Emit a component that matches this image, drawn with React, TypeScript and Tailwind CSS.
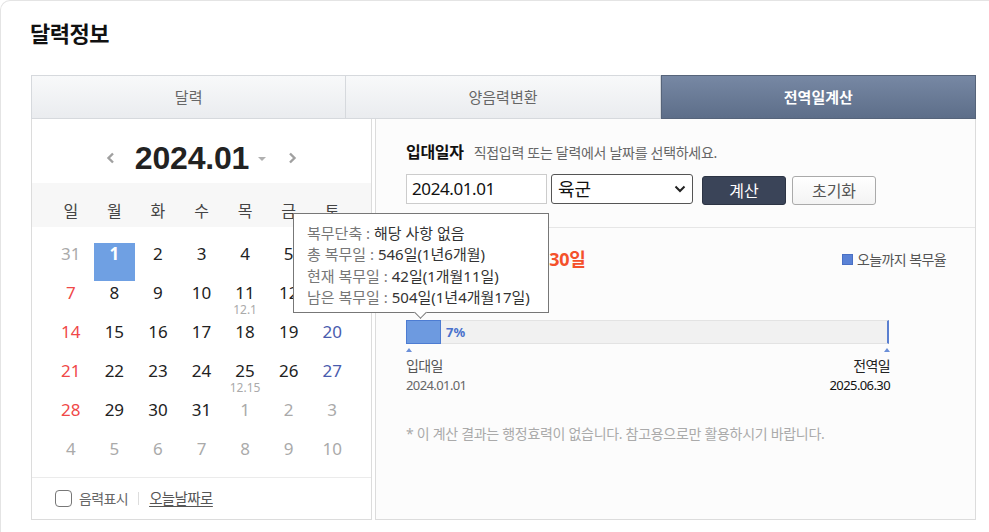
import React from "react"

type Day = { d: number; other?: boolean; lunar?: string; selected?: boolean }

const weekdays = ["일", "월", "화", "수", "목", "금", "토"]

const weeks: Day[][] = [
  [{ d: 31, other: true }, { d: 1, selected: true }, { d: 2 }, { d: 3 }, { d: 4 }, { d: 5 }, { d: 6 }],
  [{ d: 7 }, { d: 8 }, { d: 9 }, { d: 10 }, { d: 11, lunar: "12.1" }, { d: 12 }, { d: 13 }],
  [{ d: 14 }, { d: 15 }, { d: 16 }, { d: 17 }, { d: 18 }, { d: 19 }, { d: 20 }],
  [{ d: 21 }, { d: 22 }, { d: 23 }, { d: 24 }, { d: 25, lunar: "12.15" }, { d: 26 }, { d: 27 }],
  [{ d: 28 }, { d: 29 }, { d: 30 }, { d: 31 }, { d: 1, other: true }, { d: 2, other: true }, { d: 3, other: true }],
  [4, 5, 6, 7, 8, 9, 10].map((d) => ({ d, other: true })),
]

function dayColor(day: Day, col: number) {
  if (day.selected) return "text-white font-bold"
  if (day.other) return "text-[#aaaaaa]"
  if (col === 0) return "text-[#f04848]"
  if (col === 6) return "text-[#4a5cae]"
  return "text-[#222222]"
}

function Tab({ label, active = false, first = false }: { label: string; active?: boolean; first?: boolean }) {
  if (active) {
    return (
      <div className="flex-1 flex items-center justify-center border border-[#56647a] bg-gradient-to-b from-[#7788a4] to-[#5d6e89] text-white font-bold text-[15px]">
        {label}
      </div>
    )
  }
  return (
    <div
      className={
        "flex-1 flex items-center justify-center border-y border-r border-[#d6d9dd] bg-gradient-to-b from-[#f8f9fa] to-[#eaecef] text-[#666666] text-[15px] " +
        (first ? "border-l" : "")
      }
    >
      {label}
    </div>
  )
}

function Calendar() {
  return (
    <div className="w-[341px] border-x border-b border-[#dcdcdc] bg-white flex flex-col">
      {/* month header */}
      <div className="h-[64px] flex items-center justify-center pt-[14px]">
        <svg width="9" height="12" viewBox="0 0 9 12" className="mr-[20px]">
          <polyline points="7,1.5 2.5,6 7,10.5" fill="none" stroke="#a0a0a0" strokeWidth="2.4" />
        </svg>
        <span className="font-['Liberation_Sans',sans-serif] font-bold text-[32px] leading-none text-[#222222] tracking-[-0.2px]">
          2024.01
        </span>
        <svg width="8" height="5" viewBox="0 0 8 5" className="ml-[9px] mt-[3px]">
          <polygon points="0,0 8,0 4,4" fill="#b0b0b0" />
        </svg>
        <svg width="9" height="12" viewBox="0 0 9 12" className="ml-[22px]">
          <polyline points="2,1.5 6.5,6 2,10.5" fill="none" stroke="#a0a0a0" strokeWidth="2.4" />
        </svg>
      </div>

      {/* weekdays */}
      <div className="h-[44px] bg-[#f7f7f7] grid grid-cols-7 px-[17px] pt-[18px]">
        {weekdays.map((w) => (
          <div key={w} className="text-center text-[16px] leading-[20px] text-[#444444]">
            {w}
          </div>
        ))}
      </div>

      {/* dates */}
      <div className="px-[17px] pt-[16px]">
        {weeks.map((week, wi) => (
          <div key={wi} className="grid grid-cols-7 h-[39px]">
            {week.map((day, ci) => (
              <div
                key={ci}
                className={
                  "flex flex-col items-center h-[38px] mx-px pt-px " + (day.selected ? "bg-[#6fa0e3]" : "")
                }
              >
                <span className={"text-[17px] leading-[20px] " + dayColor(day, ci)}>{day.d}</span>
                {day.lunar && <span className="text-[12px] leading-[15px] text-[#aaaaaa] -mt-px">{day.lunar}</span>}
              </div>
            ))}
          </div>
        ))}
      </div>

      {/* footer */}
      <div className="h-[42px] border-t border-[#ebebeb] flex items-center pl-[23px] text-[14px] tracking-[-0.6px]">
        <span className="w-[17px] h-[17px] rounded-[4px] border-[1.5px] border-[#777777] bg-white" />
        <span className="ml-[7px] text-[#666666]">음력표시</span>
        <span className="ml-[10px] mr-[10px] w-px h-[13px] bg-[#dddddd]" />
        <span className="text-[#555555] text-[14.5px] underline underline-offset-2">오늘날짜로</span>
      </div>
    </div>
  )
}

function Calculator() {
  return (
    <div className="flex-1 ml-[3px] border-x border-b border-[#dcdcdc] bg-[#fcfcfc] flex flex-col">
      {/* input section */}
      <div className="h-[109px] border-b border-[#e6e6e6] pl-[30px] pt-[22px]">
        <div className="flex items-baseline">
          <span className="text-[16px] leading-[23px] font-bold text-[#111111] tracking-[-0.3px]">입대일자</span>
          <span className="ml-[10px] text-[14px] text-[#666666] tracking-[-0.3px]">
            직접입력 또는 달력에서 날짜를 선택하세요.
          </span>
        </div>
        <div className="flex items-start mt-[10px]">
          <div className="w-[141px] h-[30px] border border-[#cccccc] bg-white flex items-center pl-[5px] text-[17px] text-[#111111] tracking-[-0.4px]">
            2024.01.01
          </div>
          <div className="ml-[4px] w-[142px] h-[30px] border border-[#555555] rounded-[3px] bg-white flex items-center justify-between pl-[6px] pr-[6px] text-[18px] text-[#111111]">
            <span>육군</span>
            <svg width="12" height="8" viewBox="0 0 12 8">
              <polyline points="1.5,1.5 6,6 10.5,1.5" fill="none" stroke="#222222" strokeWidth="2" />
            </svg>
          </div>
          <div className="ml-[9px] mt-[2px] w-[84px] h-[29px] rounded-[3px] bg-[#3a4458] border border-[#2c3444] flex items-center justify-center text-white text-[16px]">
            계산
          </div>
          <div className="ml-[6px] mt-[2px] w-[84px] h-[29px] rounded-[3px] bg-gradient-to-b from-white to-[#f3f3f3] border border-[#aaaaaa] flex items-center justify-center text-[#555555] text-[16px]">
            초기화
          </div>
        </div>
      </div>

      {/* result section */}
      <div className="pl-[30px] pr-[29px]">
        <div className="mt-[18px] h-[26px] flex items-center justify-between">
          <span className="pl-[42px] text-[18px] font-bold text-[#f4512b] tracking-[-0.3px]">2025년 06월 30일</span>
          <span className="flex items-center text-[14px] text-[#555555] tracking-[-0.6px]">
            <span className="w-[11px] h-[11px] bg-[#5a82d6] border border-[#4a70c4] mr-[4px]" />
            오늘까지 복무율
          </span>
        </div>

        <div className="mt-[48px] w-[483px] h-[24px] flex bg-[#f1f1f1] border-y border-[#e3e3e3] border-r-2 border-r-[#5a7fd0]">
          <div className="w-[35px] -my-px bg-[#6d9ae0] border border-[#4d7cd2]" />
          <span className="ml-[5px] text-[13px] leading-[22px] font-bold text-[#4a72cc]">7%</span>
        </div>

        <div className="mt-[4px] w-[484px] flex justify-between">
          <span className="w-0 h-0 border-x-[3px] border-x-transparent border-b-[4px] border-b-[#6b8fd8]" />
          <span className="w-0 h-0 border-x-[3px] border-x-transparent border-b-[4px] border-b-[#6b8fd8]" />
        </div>

        <div className="mt-[4px] w-[484px] flex justify-between tracking-[-0.6px]">
          <div className="flex flex-col">
            <span className="text-[14px] leading-[20px] text-[#555555]">입대일</span>
            <span className="text-[13px] leading-[18px] text-[#666666]">2024.01.01</span>
          </div>
          <div className="flex flex-col items-end">
            <span className="text-[14px] leading-[20px] text-[#222222]">전역일</span>
            <span className="text-[13px] leading-[18px] text-[#111111]">2025.06.30</span>
          </div>
        </div>

        <div className="mt-[31px] text-[14px] leading-[18px] text-[#aaaaaa] tracking-[-0.3px]">
          * 이 계산 결과는 행정효력이 없습니다. 참고용으로만 활용하시기 바랍니다.
        </div>
      </div>
    </div>
  )
}

function Tooltip() {
  const rows: [string, string][] = [
    ["복무단축 : ", "해당 사항 없음"],
    ["총 복무일 : ", "546일(1년6개월)"],
    ["현재 복무일 : ", "42일(1개월11일)"],
    ["남은 복무일 : ", "504일(1년4개월17일)"],
  ]
  return (
    <div className="absolute left-[293px] top-[213px] w-[256px] h-[100px] bg-white border border-[#777777] pl-[13px] pt-[9px] text-[15px] leading-[21.3px]">
      {rows.map(([k, v]) => (
        <div key={k} className="whitespace-nowrap">
          <span className="text-[#777777]">{k}</span>
          <span className="text-[#333333]">{v}</span>
        </div>
      ))}
      <span className="absolute left-[122px] bottom-[-5px] w-[9px] h-[9px] rotate-45 bg-white border-r border-b border-[#777777]" />
    </div>
  )
}

export default function App() {
  return (
    <div className="relative w-[989px] h-[532px] overflow-hidden bg-white font-['Noto_Sans','Noto_Sans_CJK_KR',sans-serif]">
      <div className="h-full border-l border-t border-[#e4e4e4] rounded-tl-[10px] pl-[30px] pt-[18px]">
        <h1 className="-ml-px text-[22px] leading-[29px] font-bold text-[#111111] tracking-[-0.5px]">달력정보</h1>

        <div className="mt-[27px] w-[945px]">
          <div className="flex h-[44px]">
            <Tab label="달력" first />
            <Tab label="양음력변환" />
            <Tab label="전역일계산" active />
          </div>
          <div className="flex">
            <Calendar />
            <Calculator />
          </div>
        </div>
      </div>
      <Tooltip />
    </div>
  )
}
